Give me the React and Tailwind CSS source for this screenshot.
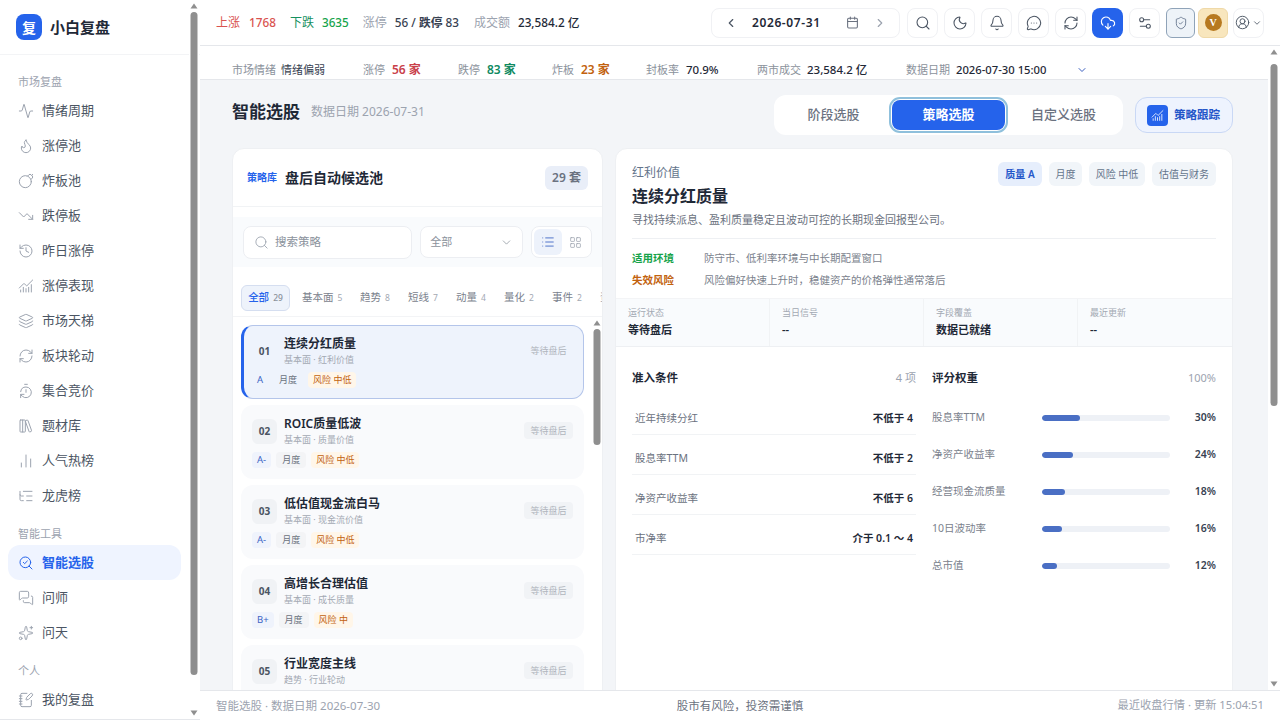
import {
  Activity,
  Flame,
  Bomb,
  TrendingDown,
  History,
  ChartNoAxesCombined,
  Layers,
  RefreshCw,
  TimerReset,
  LibraryBig,
  ChartNoAxesColumn,
  ListTree,
  SearchCheck,
  MessagesSquare,
  Sparkles,
  NotebookPen,
  ChevronLeft,
  ChevronRight,
  ChevronDown,
  Calendar,
  Search,
  Moon,
  Bell,
  MessageCircleMore,
  CloudDownload,
  Settings2,
  ShieldCheck,
  CircleUserRound,
  List,
  LayoutGrid,
} from "lucide-react";

const navGroups = [
  {
    title: "市场复盘",
    items: [
      ["情绪周期", Activity],
      ["涨停池", Flame],
      ["炸板池", Bomb],
      ["跌停板", TrendingDown],
      ["昨日涨停", History],
      ["涨停表现", ChartNoAxesCombined],
      ["市场天梯", Layers],
      ["板块轮动", RefreshCw],
      ["集合竞价", TimerReset],
      ["题材库", LibraryBig],
      ["人气热榜", ChartNoAxesColumn],
      ["龙虎榜", ListTree],
    ],
  },
  {
    title: "智能工具",
    items: [
      ["智能选股", SearchCheck, true],
      ["问师", MessagesSquare],
      ["问天", Sparkles],
    ],
  },
  { title: "个人", items: [["我的复盘", NotebookPen]] },
];

const categories = [
  ["基本面", 5],
  ["趋势", 8],
  ["短线", 7],
  ["动量", 4],
  ["量化", 2],
  ["事件", 2],
];

const strategies = [
  { no: "01", name: "连续分红质量", sub: "基本面 · 红利价值", grade: "A", risk: "风险 中低", active: true },
  { no: "02", name: "ROIC质量低波", sub: "基本面 · 质量价值", grade: "A-", risk: "风险 中低" },
  { no: "03", name: "低估值现金流白马", sub: "基本面 · 现金流价值", grade: "A-", risk: "风险 中低" },
  { no: "04", name: "高增长合理估值", sub: "基本面 · 成长质量", grade: "B+", risk: "风险 中" },
  { no: "05", name: "行业宽度主线", sub: "趋势 · 行业轮动", grade: "B+", risk: "风险 中" },
];

const conditions = [
  ["近年持续分红", "不低于 4"],
  ["股息率TTM", "不低于 2"],
  ["净资产收益率", "不低于 6"],
  ["市净率", "介于 0.1 ～ 4"],
];

const weights = [
  ["股息率TTM", 30],
  ["净资产收益率", 24],
  ["经营现金流质量", 18],
  ["10日波动率", 16],
  ["总市值", 12],
];

const stats = [
  ["运行状态", "等待盘后"],
  ["当日信号", "--"],
  ["字段覆盖", "数据已就绪"],
  ["最近更新", "--"],
];

const toolIcons = [Search, Moon, Bell, MessageCircleMore, RefreshCw];

// scrollbars are drawn, the headless browser hides the native ones
function FakeScrollbar({ className, thumbTop, thumbHeight }) {
  return (
    <div className={`absolute top-0 bottom-0 bg-white flex flex-col items-center justify-between py-[3px] ${className}`}>
      <svg width="8" height="6" viewBox="0 0 8 6" className="fill-[#8f8f8f] shrink-0">
        <path d="M4 0.5 L7.5 5.5 L0.5 5.5 Z" />
      </svg>
      <div
        className="absolute left-1/2 -translate-x-1/2 w-[7px] rounded-full bg-[#8f8f8f]"
        style={{ top: thumbTop, height: thumbHeight }}
      />
      <svg width="8" height="6" viewBox="0 0 8 6" className="fill-[#8f8f8f] shrink-0">
        <path d="M4 5.5 L7.5 0.5 L0.5 0.5 Z" />
      </svg>
    </div>
  );
}

function Sidebar() {
  return (
    <aside className="relative w-[200px] h-full shrink-0 overflow-hidden bg-white border-b border-[#e5e7eb]">
      <div className="h-[55px] flex items-center gap-2 pl-4 border-b border-[#f3f4f6]">
        <div className="w-[26px] h-[26px] rounded-lg bg-[#2563eb] flex items-center justify-center text-white text-[14px] font-bold">
          复
        </div>
        <span className="text-[15px] font-semibold text-[#1f2937]">小白复盘</span>
      </div>
      <nav className="px-2 pt-[16px]">
        {navGroups.map((group, i) => (
          <div key={group.title} className={i > 0 ? "mt-[10px]" : ""}>
            <div className="h-[22px] pl-2.5 flex items-center text-[11px] text-[#9ca3af]">
              {group.title}
            </div>
            {group.items.map(([label, Icon, active]) => (
              <div
                key={label}
                className={
                  active
                    ? "h-[35px] w-[173px] pl-2.5 flex items-center gap-2 rounded-xl bg-[#eff4ff] text-[#2563eb] font-semibold text-[13px]"
                    : "h-[35px] pl-2.5 flex items-center gap-2 text-[#4b5563] text-[13px]"
                }
              >
                <Icon
                  size={16}
                  strokeWidth={1.5}
                  className={active ? "text-[#2563eb]" : "text-[#9ca3af]"}
                />
                <span>{label}</span>
              </div>
            ))}
          </div>
        ))}
      </nav>
      <FakeScrollbar className="right-[1px] w-[10px]" thumbTop={12} thumbHeight={663} />
    </aside>
  );
}

function TopBar() {
  return (
    <header className="h-[46px] shrink-0 bg-white border-b border-[#e5e7eb] flex items-center pl-4 pr-4 text-[12px]">
      <span className="text-[#d9534f]">上涨</span>
      <span className="ml-[9px] text-[11.75px] font-medium text-[#d9534f]">1768</span>
      <span className="ml-[14px] text-[#16905f]">下跌</span>
      <span className="ml-[8px] text-[11.75px] font-medium text-[#16a34a]">3635</span>
      <span className="ml-[14px] text-[#9ca3af]">涨停</span>
      <span className="ml-[8px] text-[11.75px] font-medium text-[#374151]">
        56 / <b className="font-semibold">跌停</b> 83
      </span>
      <span className="ml-[15px] text-[#9ca3af]">成交额</span>
      <span className="ml-[8px] text-[11.75px] font-medium text-[#1f2937]">23,584.2 亿</span>

      <div className="ml-auto flex items-center gap-[6px]">
        <div className="w-[189px] h-[30px] mr-[1px] rounded-lg border border-[#f0f1f4] flex items-center pl-3 pr-3 text-[#4b5563]">
          <ChevronLeft size={14} />
          <span className="ml-[14px] text-[12px] font-semibold tracking-[0.6px] text-[#1f2937]">
            2026-07-31
          </span>
          <Calendar size={13} className="ml-auto text-[#6b7280]" />
          <ChevronRight size={14} className="ml-[14px] text-[#9ca3af]" />
        </div>
        {toolIcons.map((Icon, i) => (
          <div
            key={i}
            className="w-[31px] h-[30px] rounded-lg border border-[#f0f1f4] flex items-center justify-center text-[#4b5563]"
          >
            <Icon size={16} strokeWidth={1.6} />
          </div>
        ))}
        <div className="w-[31px] h-[30px] rounded-lg bg-[#2563eb] flex items-center justify-center text-white">
          <CloudDownload size={16} strokeWidth={1.7} />
        </div>
        <div className="w-[31px] h-[30px] rounded-lg border border-[#f0f1f4] flex items-center justify-center text-[#4b5563]">
          <Settings2 size={16} strokeWidth={1.6} />
        </div>
        <div className="w-[29px] h-[30px] rounded-md border border-[#8fa3b8] bg-[#eef3f8] flex items-center justify-center text-[#64748b]">
          <ShieldCheck size={14} strokeWidth={1.5} />
        </div>
        <div className="w-[30px] h-[30px] -ml-[3px] rounded-md border border-[#efd9a8] bg-[#f8e6bd] flex items-center justify-center">
          <span className="w-[17px] h-[17px] rounded-full bg-[#b7791f] text-white text-[10px] font-bold flex items-center justify-center font-['Liberation_Serif',serif]">
            V
          </span>
        </div>
        <div className="w-[31px] h-[30px] -ml-[1px] rounded-lg border border-[#f0f1f4] flex items-center justify-center gap-[2px] text-[#4b5563]">
          <CircleUserRound size={15} strokeWidth={1.5} />
          <ChevronDown size={10} />
        </div>
      </div>
    </header>
  );
}

function MarketStrip() {
  const item = "flex items-center";
  const label = "text-[11px] text-[#8b929c]";
  return (
    <div className="h-[34px] bg-white border-b border-[#e5e7eb] flex items-center pt-[15px] pl-8 text-[11px] text-[#1f2937]">
      <div className={`${item} w-[131px]`}>
        <span className={label}>市场情绪</span>
        <span className="ml-[5px] text-[#374151]">情绪偏弱</span>
      </div>
      <div className={`${item} w-[95px]`}>
        <span className={label}>涨停</span>
        <span className="ml-[7px] text-[12px] font-semibold text-[#c9404a]">56 家</span>
      </div>
      <div className={`${item} w-[94px]`}>
        <span className={label}>跌停</span>
        <span className="ml-[7px] text-[12px] font-semibold text-[#0f8a5f]">83 家</span>
      </div>
      <div className={`${item} w-[94px]`}>
        <span className={label}>炸板</span>
        <span className="ml-[7px] text-[12px] font-semibold text-[#c2620e]">23 家</span>
      </div>
      <div className={`${item} w-[111px]`}>
        <span className={label}>封板率</span>
        <span className="ml-[7px] font-medium text-[11.5px]">70.9%</span>
      </div>
      <div className={`${item} w-[149px]`}>
        <span className={label}>两市成交</span>
        <span className="ml-[6px] font-medium text-[11.5px]">23,584.2 亿</span>
      </div>
      <div className={`${item} w-[170px]`}>
        <span className={label}>数据日期</span>
        <span className="ml-[6px] font-medium text-[11.25px]">2026-07-30 15:00</span>
      </div>
      <ChevronDown size={12} className="text-[#3b5fc0]" />
    </div>
  );
}

function PageHeader() {
  return (
    <div className="flex items-center justify-between h-[40px] mt-[15px]">
      <div className="flex items-center gap-[11px] -mt-[6px]">
        <h1 className="text-[17px] font-semibold text-[#1f2937]">智能选股</h1>
        <span className="text-[12px] text-[#9ca3af]">数据日期 2026-07-31</span>
      </div>
      <div className="flex items-center gap-3">
        <div className="h-[40px] w-[349px] px-[2px] bg-white rounded-xl flex items-center text-[13px] font-medium text-[#6b7280]">
          <div className="w-[115px] text-center">阶段选股</div>
          <div className="w-[113px] mx-[1px] h-[30px] rounded-lg bg-[#2563eb] text-white font-semibold flex items-center justify-center outline-2 outline-offset-1 outline-[#8fc0dc]">
            策略选股
          </div>
          <div className="w-[115px] text-center">自定义选股</div>
        </div>
        <div className="h-[36px] w-[98px] rounded-xl border border-[#c9d8f5] bg-[#eef3fe] flex items-center pl-[11px] gap-[6px]">
          <div className="w-[21px] h-[21px] rounded bg-[#2563eb] text-white flex items-center justify-center">
            <ChartNoAxesCombined size={13} strokeWidth={1.5} />
          </div>
          <span className="text-[11.5px] font-semibold text-[#2456c9]">策略跟踪</span>
        </div>
      </div>
    </div>
  );
}

function StrategyCard({ s }) {
  return (
    <div
      className={
        s.active
          ? "h-[74px] mr-[18px] shrink-0 rounded-xl border border-[#b4c5ea] border-l-[3px] border-l-[#2563eb] bg-[#eef3fc] pl-2 pr-2.5 pt-[10px]"
          : "h-[74px] mr-[18px] shrink-0 rounded-xl border border-transparent bg-[#f9fafc] pl-2.5 pr-2.5 pt-[10px]"
      }
    >
      <div className="flex items-start">
        <div
          className={
            s.active
              ? "w-[25px] h-[25px] mt-[3px] rounded-md flex items-center justify-center text-[10px] font-bold text-[#4b5563]"
              : "w-[25px] h-[25px] mt-[3px] rounded-md bg-[#f0f2f5] flex items-center justify-center text-[10px] font-bold text-[#4b5563]"
          }
        >
          {s.no}
        </div>
        <div className="ml-[7px] flex-1 min-w-0">
          <div className="text-[12px] leading-[16px] font-semibold text-[#1f2937]">{s.name}</div>
          <div className="text-[9px] leading-[15px] text-[#a3a9b3]">{s.sub}</div>
        </div>
        <div
          className={
            s.active
              ? "mt-[6px] h-[17px] w-[49px] flex items-center justify-center rounded text-[9px] text-[#b0b5bd]"
              : "mt-[6px] h-[17px] w-[49px] flex items-center justify-center rounded bg-[#f1f3f6] text-[9px] text-[#b0b5bd]"
          }
        >
          等待盘后
        </div>
      </div>
      <div className="mt-[5px] flex items-center gap-[5px] text-[9px]">
        <span
          className={
            s.active
              ? "h-4 px-[5px] flex items-center rounded text-[9.5px] text-[#3b63c4]"
              : "h-4 px-[5px] flex items-center rounded bg-[#eff3fc] text-[9.5px] text-[#3b63c4]"
          }
        >
          {s.grade}
        </span>
        <span
          className={
            s.active
              ? "h-4 w-[30px] flex items-center justify-center rounded text-[#6b7280]"
              : "h-4 w-[30px] flex items-center justify-center rounded bg-[#f3f4f6] text-[#6b7280]"
          }
        >
          月度
        </span>
        <span className="h-4 px-[5px] flex items-center rounded bg-[#fff6e9] text-[#c2620e]">{s.risk}</span>
      </div>
    </div>
  );
}

function StrategyList() {
  return (
    <section className="w-[371px] shrink-0 bg-white rounded-xl border border-[#eef0f3] overflow-hidden">
      <div className="h-[58px] border-b border-[#f1f3f5] flex items-center pl-[14px] pr-[14px]">
        <span className="text-[10px] font-semibold text-[#2563eb]">策略库</span>
        <span className="ml-2 text-[14px] font-semibold text-[#1f2937]">盘后自动候选池</span>
        <span className="ml-auto w-[43px] h-6 rounded-md bg-[#e9eef8] flex items-center justify-center text-[12px] font-semibold text-[#6b7280]">
          29 套
        </span>
      </div>
      <div className="mt-[10px] h-[50px] bg-[#f9fbfd] flex items-center pl-[10px] pr-[10px] gap-[8px]">
        <div className="w-[170px] h-[33px] rounded-lg border border-[#eceef2] bg-white flex items-center pl-[10px] gap-[6px] text-[#9ca3af]">
          <Search size={15} strokeWidth={1.4} />
          <span className="text-[11.5px] text-[#8b929c]">搜索策略</span>
        </div>
        <div className="w-[103px] h-[32px] rounded-lg border border-[#eceef2] bg-white flex items-center pl-[9px] pr-[9px] justify-between text-[11px] text-[#8b929c]">
          全部
          <ChevronDown size={13} strokeWidth={1.4} />
        </div>
        <div className="w-[61px] h-[32px] rounded-lg border border-[#eceef2] bg-white flex items-center p-[2px]">
          <div className="w-[28px] h-[26px] rounded-md bg-[#edf2fb] flex items-center justify-center text-[#3b63c4]">
            <List size={14} strokeWidth={1.5} />
          </div>
          <div className="w-[28px] flex items-center justify-center text-[#9ca3af]">
            <LayoutGrid size={13} strokeWidth={1.4} />
          </div>
        </div>
      </div>
      <div className="h-[50px] pt-[18px] pl-2 border-b border-[#f3f4f6] flex items-start overflow-hidden text-[10.5px] whitespace-nowrap">
        <div className="w-[49px] h-[26px] shrink-0 rounded-md border border-[#d5def0] bg-[#eef3fb] flex items-center justify-center gap-[4px] font-medium text-[#2563eb]">
          全部 <span className="text-[8.5px] text-[#8b929c]">29</span>
        </div>
        {categories.map(([name, n], i) => (
          <div
            key={name}
            className={
              i === 0
                ? "ml-[12px] h-[26px] w-[46px] shrink-0 flex items-center gap-[4px] text-[#7b828d]"
                : "ml-[12px] h-[26px] w-[36px] shrink-0 flex items-center gap-[4px] text-[#7b828d]"
            }
          >
            {name}
            <span className="text-[8.5px] text-[#a3a9b3]">{n}</span>
          </div>
        ))}
        <div className="ml-[12px] h-[26px] flex items-center text-[#9ca3af]">资金</div>
      </div>
      <div className="relative h-[530px] overflow-hidden pl-2 pt-[8px]">
        <div className="flex flex-col gap-[6px]">
          {strategies.map((s) => (
            <StrategyCard key={s.no} s={s} />
          ))}
        </div>
        <FakeScrollbar className="right-0 w-[11px]" thumbTop={12} thumbHeight={116} />
      </div>
    </section>
  );
}

function StrategyDetail() {
  return (
    <section className="flex-1 min-w-0 bg-white rounded-xl border border-[#eef0f3] overflow-hidden">
      <div className="px-4 pt-[15px]">
        <div className="flex items-start justify-between">
          <div>
            <div className="text-[12px] leading-[18px] text-[#64748b]">红利价值</div>
            <div className="mt-[2px] text-[16px] leading-[24px] font-semibold text-[#1f2937]">连续分红质量</div>
          </div>
          <div className="flex gap-[7px] -mt-[2px] text-[10px] text-[#64748b]">
            <span className="h-6 w-[44px] rounded-md bg-[#e6eefc] flex items-center justify-center font-semibold text-[#2456c9]">质量 A</span>
            <span className="h-6 w-[33px] rounded-md bg-[#f1f5f9] flex items-center justify-center">月度</span>
            <span className="h-6 w-[56px] rounded-md bg-[#f1f5f9] flex items-center justify-center">风险 中低</span>
            <span className="h-6 w-[64px] rounded-md bg-[#f1f5f9] flex items-center justify-center">估值与财务</span>
          </div>
        </div>
        <p className="mt-[4px] text-[11px] leading-[16px] text-[#6b7280]">
          寻找持续派息、盈利质量稳定且波动可控的长期现金回报型公司。
        </p>
        <div className="mt-[10px] border-t border-[#eef0f3] pt-[9px] pb-[6px] text-[10.5px]">
          <div className="h-[22px] flex items-center">
            <span className="w-[72px] font-semibold text-[#16a34a]">适用环境</span>
            <span className="text-[#7b828d]">防守市、低利率环境与中长期配置窗口</span>
          </div>
          <div className="h-[22px] flex items-center">
            <span className="w-[72px] font-semibold text-[#c2620e]">失效风险</span>
            <span className="text-[#7b828d]">风险偏好快速上升时，稳健资产的价格弹性通常落后</span>
          </div>
        </div>
      </div>
      <div className="grid grid-cols-4 h-[49px] bg-[#f9fbfd] border-b border-[#eef0f3] border-t border-t-[#f3f4f6]">
        {stats.map(([k, v]) => (
          <div key={k} className="pl-3 pt-[7px] border-r border-[#f1f3f5] last:border-r-0">
            <div className="text-[9px] leading-[14px] text-[#a3a9b3]">{k}</div>
            <div className="mt-[2px] text-[11px] leading-[16px] font-semibold text-[#1f2937]">{v}</div>
          </div>
        ))}
      </div>
      <div className="grid grid-cols-2 gap-4 px-4 pt-[22px] h-[480px]">
        <div>
          <div className="flex items-center justify-between h-[18px]">
            <span className="text-[11.5px] font-semibold text-[#1f2937]">准入条件</span>
            <span className="text-[11px] text-[#9ca3af]">4 项</span>
          </div>
          <div className="mt-[8px]">
            {conditions.map(([k, v]) => (
              <div key={k} className="h-[40px] pt-[9px] flex items-center justify-between px-[3px] border-b border-[#f1f3f5] text-[10.5px]">
                <span className="text-[#6b7280]">{k}</span>
                <span className="font-semibold text-[#1f2937]">{v}</span>
              </div>
            ))}
          </div>
        </div>
        <div>
          <div className="flex items-center justify-between h-[18px]">
            <span className="text-[11.5px] font-semibold text-[#1f2937]">评分权重</span>
            <span className="text-[11px] text-[#9ca3af]">100%</span>
          </div>
          <div className="mt-[12px]">
            {weights.map(([k, v]) => (
              <div key={k} className="h-[37px] flex items-center text-[10.5px]">
                <span className="w-[110px] shrink-0 text-[#7b828d]">{k}</span>
                <div className="w-[128px] h-[6px] rounded-full bg-[#eef1f6] overflow-hidden">
                  <div className="h-full rounded-full bg-[#4a6fc4]" style={{ width: `${v}%` }} />
                </div>
                <span className="ml-auto font-semibold text-[#374151]">{v}%</span>
              </div>
            ))}
          </div>
        </div>
      </div>
    </section>
  );
}

export default function App() {
  return (
    <div className="h-screen flex overflow-hidden bg-white font-['Noto_Sans','Noto_Sans_CJK_SC',sans-serif]">
      <Sidebar />
      <div className="flex-1 min-w-0 flex flex-col">
        <TopBar />
        <div className="relative flex-1 min-h-0">
          <main className="h-full overflow-hidden mr-[12px] bg-[#f3f5f8]">
            <MarketStrip />
            <div className="pl-8 pr-[35px]">
              <PageHeader />
              <div className="mt-[13px] flex gap-3 items-start">
                <StrategyList />
                <StrategyDetail />
              </div>
            </div>
          </main>
          <FakeScrollbar className="right-0 w-[12px]" thumbTop={18} thumbHeight={342} />
        </div>
        <footer className="h-[30px] shrink-0 bg-white border-t border-[#e5e7eb] grid grid-cols-3 items-center px-4 text-[11.25px] text-[#9ca3af]">
          <span className="text-[11.5px]">智能选股 · 数据日期 2026-07-30</span>
          <span className="text-center text-[11.5px] text-[#6b7280]">股市有风险，投资需谨慎</span>
          <span className="text-right">最近收盘行情 · 更新 15:04:51</span>
        </footer>
      </div>
    </div>
  );
}
